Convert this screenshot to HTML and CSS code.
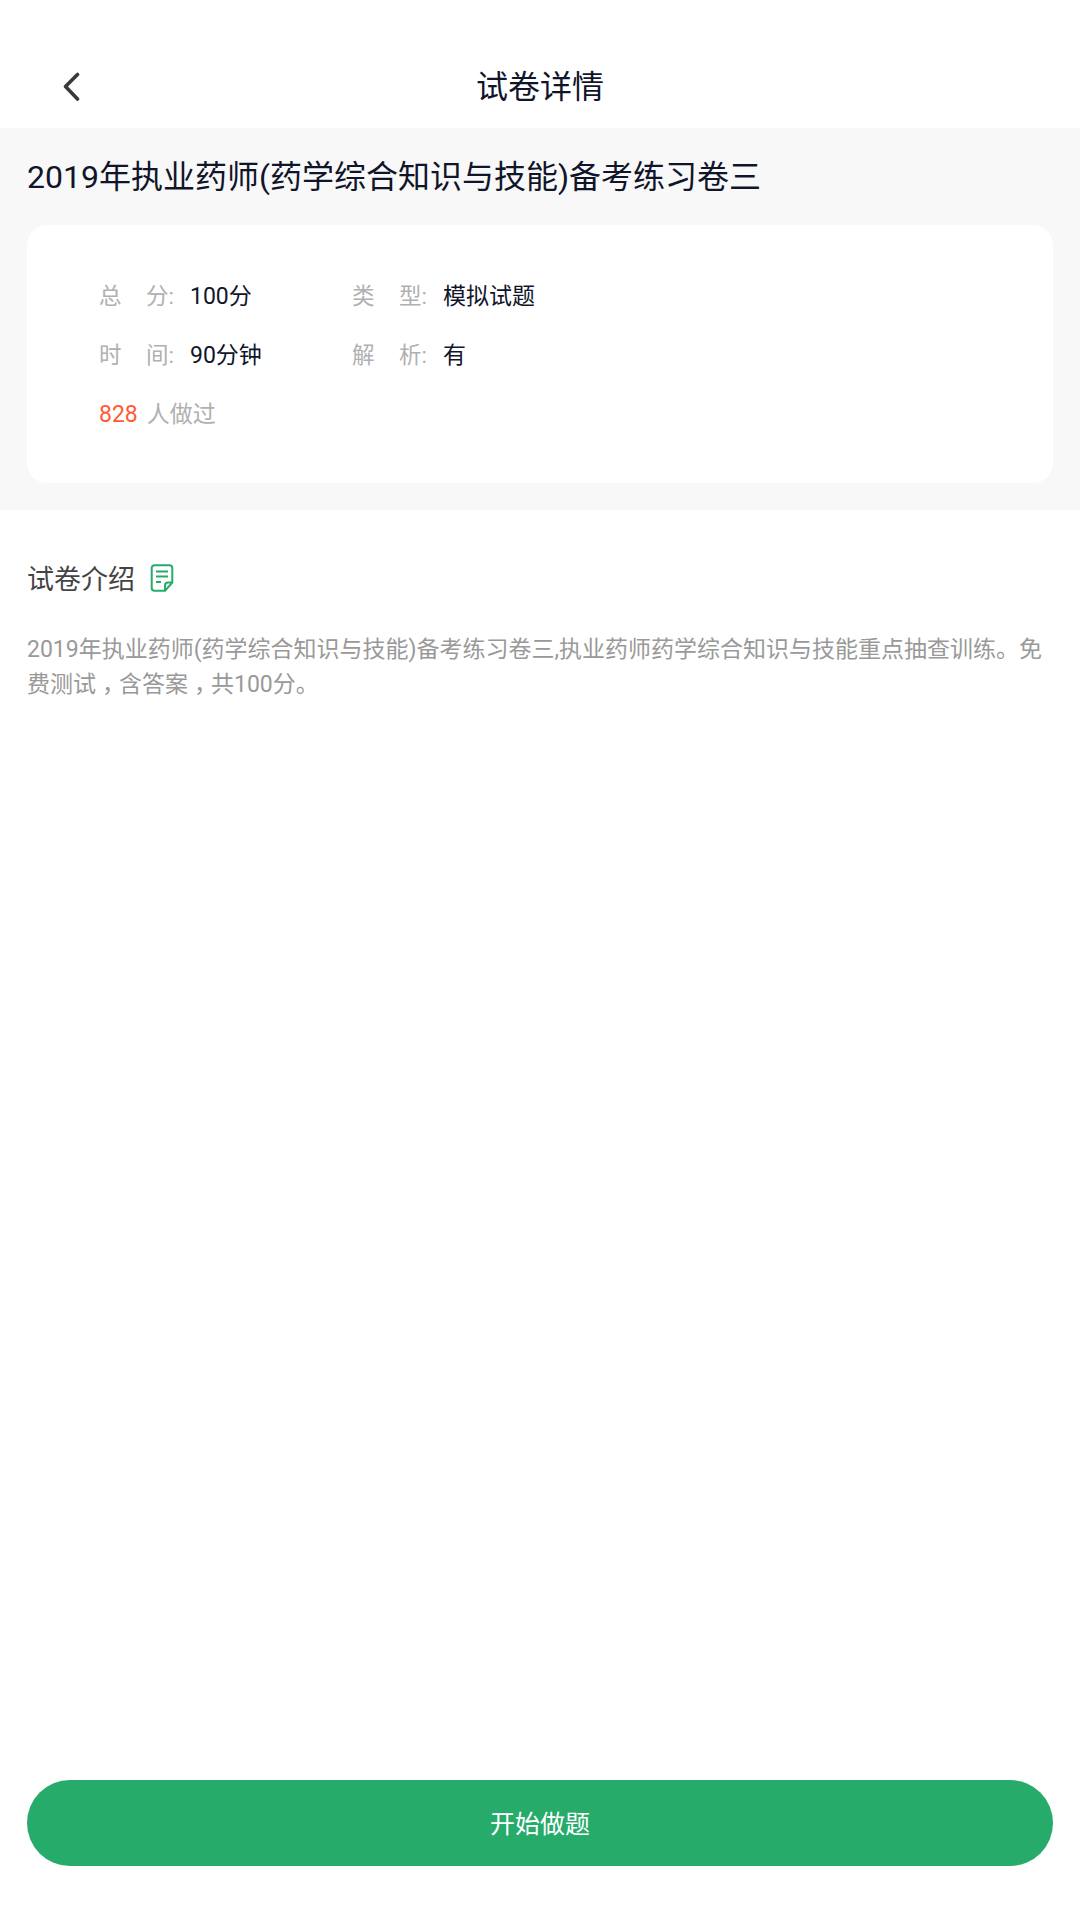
FILE: index.html
```html
<!DOCTYPE html>
<html lang="zh-CN">
<head>
<meta charset="utf-8">
<title>试卷详情</title>
<link rel="stylesheet" href="styles.css">
</head>
<body>
<div class="page">
  <header class="nav">
    <svg class="back" viewBox="0 0 18 30" aria-hidden="true"><path d="M15.5 2.5 3.5 14.5 15.5 27" fill="none" stroke="#3a3a3a" stroke-width="3.6" stroke-linecap="round" stroke-linejoin="round"/></svg>
    <h1 class="nav-title">试卷详情</h1>
  </header>
  <section class="summary">
    <h2 class="paper-title">2019年执业药师(药学综合知识与技能)备考练习卷三</h2>
    <div class="card">
      <div class="info-row">
        <div class="info-cell"><span class="label"><span>总</span><span>分:</span></span><span class="value">100分</span></div>
        <div class="info-cell"><span class="label"><span>类</span><span>型:</span></span><span class="value">模拟试题</span></div>
      </div>
      <div class="info-row">
        <div class="info-cell"><span class="label"><span>时</span><span>间:</span></span><span class="value">90分钟</span></div>
        <div class="info-cell"><span class="label"><span>解</span><span>析:</span></span><span class="value">有</span></div>
      </div>
      <div class="info-row">
        <div class="done"><span class="count">828</span><span class="done-text">人做过</span></div>
      </div>
    </div>
  </section>
  <section class="intro">
    <div class="intro-head">
      <h3 class="intro-title">试卷介绍</h3>
      <svg class="doc" viewBox="0 0 23 28" aria-hidden="true">
        <path d="M4 1.2H19A2.8 2.8 0 0 1 21.8 4V18.5L14.5 26.8H4A2.8 2.8 0 0 1 1.2 24V4A2.8 2.8 0 0 1 4 1.2Z" fill="none" stroke="#26ab6b" stroke-width="2" stroke-linejoin="round"/>
        <path d="M14.5 26.5V21.5A3 3 0 0 1 17.5 18.5H21.5" fill="none" stroke="#26ab6b" stroke-width="2" stroke-linejoin="round"/>
        <path d="M5.5 7.5H17.5M5.5 12.5H17.5M5.5 18H10.5" fill="none" stroke="#26ab6b" stroke-width="2"/>
      </svg>
    </div>
    <p class="intro-text">2019年执业药师(药学综合知识与技能)备考练习卷三,执业药师药学综合知识与技能重点抽查训练。免费测试<span class="comma" lang="zh-TW">，</span>含答案<span class="comma" lang="zh-TW">，</span>共100分。</p>
  </section>
  <div class="action">
    <button class="start" type="button">开始做题</button>
  </div>
</div>
</body>
</html>
```
FILE: styles.css
```css
* { box-sizing: border-box; margin: 0; padding: 0; }
html, body { width: 1080px; height: 1920px; background: #fff; }
body { font-family: Roboto, "Noto Sans CJK SC", sans-serif; overflow: hidden; }
.page { display: flex; flex-direction: column; height: 1920px; }

.nav { position: relative; height: 128px; padding-top: 64px; text-align: center; flex: none; }
.back { position: absolute; left: 62px; top: 72px; width: 18px; height: 30px; }
.nav-title { font-size: 32px; font-weight: 400; line-height: 46px; color: #10152a; }

.summary { background: #f8f8f8; height: 382px; padding: 0 27px; flex: none; }
.paper-title { font-size: 32px; font-weight: 400; line-height: 46px; color: #10152a; padding-top: 26px; height: 97px; }
.card { background: #fff; border-radius: 20px; height: 258px; padding: 39.5px 0 0 72px; }
.info-row { display: flex; height: 58.7px; align-items: center; }
.info-cell { display: flex; width: 253px; align-items: center; }
.label { display: flex; justify-content: space-between; width: 75px; margin-right: 16px; font-size: 22.5px; color: #b0b0b0; }
.value { font-size: 23px; color: #10152a; }
.done { display: flex; align-items: baseline; font-size: 23px; padding-top: 2px; }
.count { color: #ff5a35; margin-right: 9px; }
.done-text { color: #b0b0b0; }

.intro { padding: 0 27px; flex: 1; }
.intro-head { display: flex; align-items: center; height: 134px; }
.intro-title { font-size: 27px; font-weight: 400; color: #444; margin-right: 15px; }
.doc { width: 24px; height: 28px; margin-top: 2px; }
.intro-text { font-size: 23px; line-height: 34.5px; color: #999; margin-top: -11px; }
.comma { font-family: "Noto Sans CJK TC", sans-serif; line-height: 0; vertical-align: -.3em; }

.action { padding: 0 27px 54px; flex: none; }
.start { display: block; width: 100%; height: 86px; border: 0; border-radius: 43px; padding-bottom: 3px; background: #26ab6b; color: #fff; font: 400 25px Roboto, "Noto Sans CJK SC", sans-serif; }
```
